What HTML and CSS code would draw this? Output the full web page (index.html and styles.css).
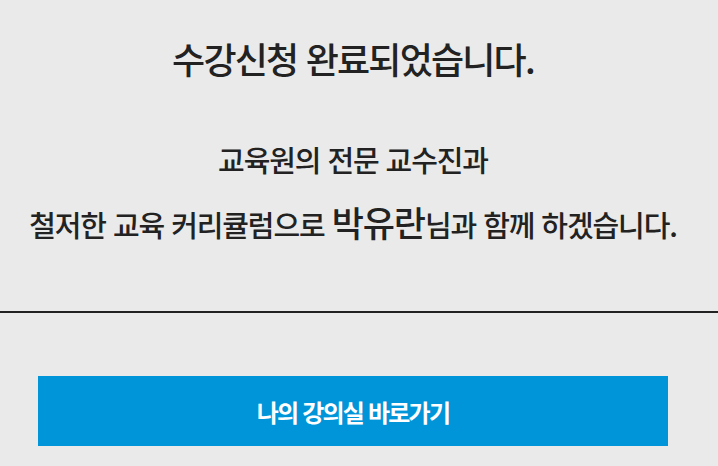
FILE: index.html
```html
<!DOCTYPE html>
<html lang="ko">
<head>
<meta charset="utf-8">
<link rel="stylesheet" href="styles.css">
</head>
<body>
<div class="page">
  <section class="message">
    <h1 class="title">수강신청 완료되었습니다.</h1>
    <p class="line">교육원의 전문 교수진과</p>
    <p class="line">철저한 교육 커리큘럼으로 <span class="name">박유란</span>님과 함께 하겠습니다.</p>
  </section>
  <div class="actions">
    <a class="btn" href="#">나의 강의실 바로가기</a>
  </div>
</div>
</body>
</html>
```
FILE: styles.css
```css
html, body {
  margin: 0;
  padding: 0;
  background: #eaeaea;
}
body {
  font-family: "Noto Sans CJK KR", "Noto Sans", sans-serif;
  color: #222;
  width: 718px;
  height: 466px;
  overflow: hidden;
}
.message {
  border-bottom: 2px solid #222;
  padding: 33px 12px 0 0;
  height: 313px;
  box-sizing: border-box;
  text-align: center;
}
.title {
  margin: 0;
  font-size: 36px;
  font-weight: 500;
  letter-spacing: -1.8px;
  line-height: 50px;
}
.line {
  margin: 0;
  font-size: 29px;
  font-weight: 500;
  letter-spacing: -1.1px;
  line-height: 40px;
}
.title + .line {
  margin-top: 56px;
}
.line + .line {
  margin-top: 23px;
}
.name {
  font-size: 35px;
}
.actions {
  padding: 63px 50px 0 38px;
}
.btn {
  display: flex;
  align-items: center;
  justify-content: center;
  height: 70px;
  background: #0095d8;
  color: #fff;
  font-size: 24px;
  font-weight: 700;
  letter-spacing: -1.8px;
  text-decoration: none;
}
```
